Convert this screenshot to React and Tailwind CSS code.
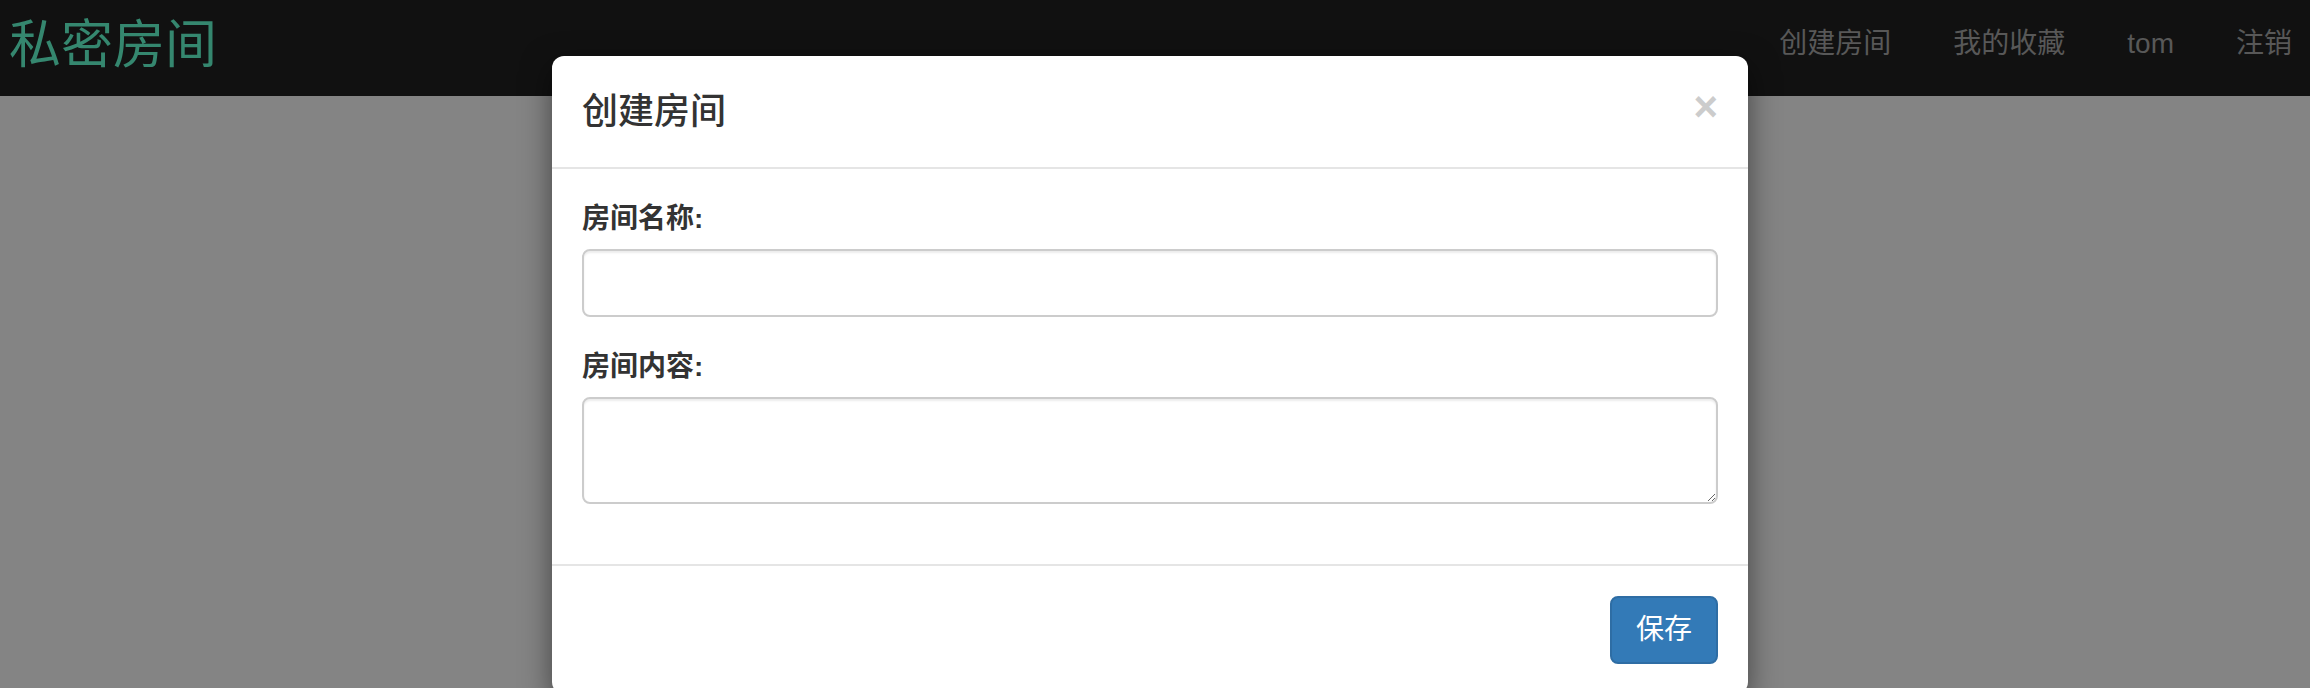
import React from 'react';

const cjk = { fontFamily: '"Helvetica Neue", "Liberation Sans", "Noto Sans CJK SC", sans-serif' };

function Navbar() {
  const links = ['创建房间', '我的收藏', 'tom', '注销'];
  return (
    <div className="flex h-[96px] items-start justify-between bg-[#111111]">
      <div className="pl-[9px] pt-[10px] text-[52px] leading-[70px] text-[#35876f]">私密房间</div>
      <ul className="flex gap-[62px] pr-[18px] pt-[24px]">
        {links.map((l) => (
          <li key={l} className="text-[28px] leading-[40px] text-[#585858]">{l}</li>
        ))}
      </ul>
    </div>
  );
}

function Field({ label, children }) {
  return (
    <div className="mb-[30px]">
      <label className="mb-[10px] block text-[28px] font-bold leading-[40px] text-[#333333]">{label}</label>
      {children}
    </div>
  );
}

function Modal() {
  return (
    <div className="absolute left-[552px] top-[56px] w-[1196px] rounded-[12px] bg-white shadow-[0_10px_30px_rgba(0,0,0,0.5)]">
      {/* header */}
      <div className="flex items-start justify-between border-b-2 border-[#e5e5e5] p-[30px]">
        <h4 className="text-[36px] font-medium leading-[51px] text-[#333333]">创建房间</h4>
        <button className="text-[42px] font-bold leading-none text-[#cccccc]" style={{ fontFamily: '"Liberation Sans", sans-serif' }}>×</button>
      </div>

      {/* body */}
      <div className="px-[30px] pt-[30px]">
        <Field label="房间名称:">
          <input
            type="text"
            className="block h-[68px] w-full rounded-[8px] border-2 border-[#cccccc] px-[24px] text-[28px] shadow-[inset_0_2px_2px_rgba(0,0,0,0.075)] outline-none"
          />
        </Field>
        <Field label="房间内容:">
          <textarea
            rows={2}
            className="block h-[107px] w-full rounded-[8px] border-2 border-[#cccccc] px-[24px] py-[12px] text-[28px] shadow-[inset_0_2px_2px_rgba(0,0,0,0.075)] outline-none"
          />
        </Field>
        <div className="h-[30px]" />
      </div>

      {/* footer */}
      <div className="flex justify-end border-t-2 border-[#e5e5e5] p-[30px]">
        <button className="h-[68px] rounded-[8px] border-2 border-[#2e6da4] bg-[#337ab7] px-[24px] text-[28px] leading-[40px] text-white">保存</button>
      </div>
    </div>
  );
}

export default function App() {
  return (
    <div className="relative h-[688px] w-[2310px] overflow-hidden bg-[#848484]" style={cjk}>
      <Navbar />
      <Modal />
    </div>
  );
}
